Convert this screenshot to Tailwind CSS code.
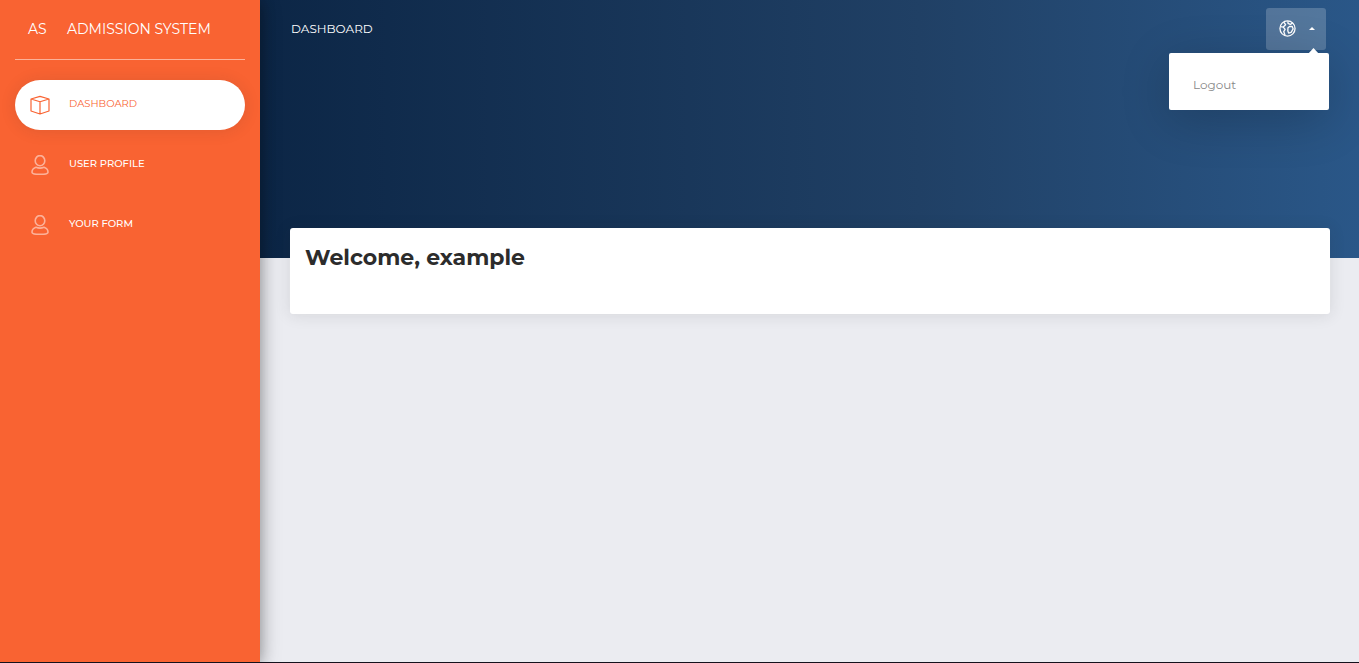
<!DOCTYPE html>
<html lang="en">
<head>
<meta charset="utf-8">
<meta name="viewport" content="width=device-width, initial-scale=1">
<title>Admission System</title>
<script src="https://cdn.jsdelivr.net/npm/@tailwindcss/browser@4"></script>
</head>
<body class="flex min-h-screen border-b border-[#14111c] bg-[#ebecf1] font-['Montserrat','Inter',sans-serif] text-[#2c2c2c]">
  <aside class="z-10 w-[260px] shrink-0 bg-[#f96332] px-[15px] text-white shadow-[0_2px_22px_0_rgba(0,0,0,0.2),0_2px_14px_0_rgba(0,0,0,0.3)]">
    <div class="flex h-[60px] items-center border-b border-white/50 pb-[1px] text-[14px] text-white">
      <a href="#" class="w-[52px] pl-[13px]">AS</a>
      <a href="#" class="whitespace-nowrap">ADMISSION SYSTEM</a>
    </div>
    <nav class="mt-5 flex flex-col gap-[10px] text-[10px]">
      <a href="#" class="flex h-[50px] items-center rounded-full bg-white pl-[15px] text-[#f96332] shadow-[0_1px_15px_1px_rgba(39,39,39,0.1)]">
        <svg class="mr-[19px] size-5" viewBox="0 0 20 20" fill="none" stroke="currentColor" stroke-width="1.2" stroke-linejoin="round" aria-hidden="true"><path d="M1 4 10 1.400 19 4v12l-9 3-9-3ZM1 4l9 2.800L19 4M10 6.800V19"/></svg>
        <span class="pb-[3px]">DASHBOARD</span>
      </a>
      <a href="#" class="flex h-[50px] items-center pl-[15px] font-medium text-white">
        <svg class="mr-[19px] size-5 opacity-50" viewBox="0 0 20 20" fill="none" stroke="white" stroke-width="1.6" aria-hidden="true"><ellipse cx="10" cy="5.700" rx="4.800" ry="5.100"/><path d="M6 12.300C3.500 13.100 2 15.200 2 17.200c0 1.500 2.800 2.200 8 2.200s8-.7 8-2.200c0-2-1.500-4.100-4-4.900-2.500 1-5.500 1-8 0Z"/></svg>
        <span class="pb-[3px]">USER PROFILE</span>
      </a>
      <a href="#" class="flex h-[50px] items-center pl-[15px] font-medium text-white">
        <svg class="mr-[19px] size-5 opacity-50" viewBox="0 0 20 20" fill="none" stroke="white" stroke-width="1.6" aria-hidden="true"><ellipse cx="10" cy="5.700" rx="4.800" ry="5.100"/><path d="M6 12.300C3.500 13.100 2 15.200 2 17.200c0 1.500 2.800 2.200 8 2.200s8-.7 8-2.200c0-2-1.500-4.100-4-4.900-2.500 1-5.500 1-8 0Z"/></svg>
        <span class="pb-[3px]">YOUR FORM</span>
      </a>
    </nav>
  </aside>
  <div class="min-w-0 flex-1">
    <header class="h-[258px] bg-[linear-gradient(to_right,#0c2646_0%,#204065_60%,#2a5788_100%)] pt-2 pr-[33px] pl-[31px] text-white">
      <div class="flex items-center justify-between">
        <a href="#" class="text-[12px]">DASHBOARD</a>
        <div class="relative">
          <button type="button" aria-label="Account menu" aria-expanded="true" class="flex h-[42px] w-[60px] items-center justify-between rounded-[3px] bg-white/20 pr-[11px] pb-[2px] pl-[13px]">
            <svg class="size-[17px]" viewBox="0 0 18 18" fill="none" stroke="white" stroke-width="1.4" stroke-linejoin="round" aria-hidden="true"><circle cx="9" cy="9" r="8"/><path d="M5 2.200 7 5 4.500 7.500 6.500 10 5 12.200 6.500 16.500M1.500 7 4.500 7.500M9.500 1.200 9.500 3.500 12 4.700 14.500 3M9.500 8.300 11.500 6.700 14 6.900 15 9.500 12.800 13 10.200 13.800 9.300 11.500Z"/></svg>
            <svg class="h-[3px] w-[6px]" viewBox="0 0 6 3" fill="white" aria-hidden="true"><path d="M0 3 3 0l3 3Z"/></svg>
          </button>
          <div class="absolute top-[45px] right-[-3px] w-40 rounded-[2px] bg-white pt-[25px] pb-[18px] shadow-[0_10px_50px_0_rgba(0,0,0,0.2)]">
            <svg class="absolute top-[-5px] right-[10px] h-[6px] w-[11px]" viewBox="0 0 11 6" fill="white" aria-hidden="true"><path d="M0 6 5.500 0 11 6Z"/></svg>
            <a href="#" class="block px-6 text-[12px] leading-[14px] text-[#888888]">Logout</a>
          </div>
        </div>
      </div>
    </header>
    <main class="-mt-[30px] pr-[29px] pl-[30px]">
      <section class="relative min-h-[86px] rounded-[3px] bg-white px-[15px] pt-[15px] shadow-[0_1px_15px_1px_rgba(39,39,39,0.1)]">
        <h1 class="text-[22px] leading-[30px] font-bold">Welcome, example</h1>
      </section>
    </main>
  </div>
</body>
</html>
